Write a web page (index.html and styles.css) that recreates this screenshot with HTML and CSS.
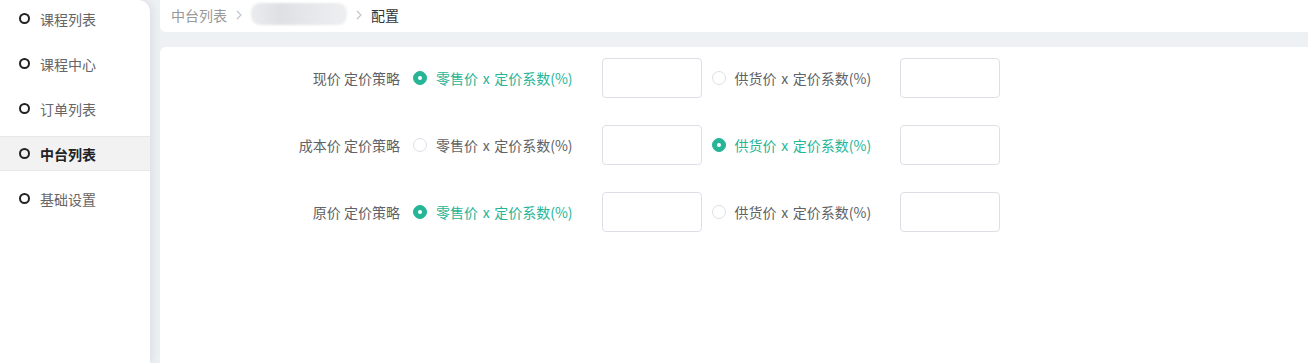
FILE: index.html
```html
<!doctype html>
<html lang="zh-CN">
<head>
    <meta charset="UTF-8">
    <meta name="viewport" content="width=device-width, initial-scale=1.0">
    <title>配置</title>
    <link rel="stylesheet" href="styles.css">
</head>
<body>
    <div class="layout">
        <!-- Sidebar -->
        <aside class="sidebar">
            <ul class="menu">
                <li class="menu-item"><span class="dot"></span>课程列表</li>
                <li class="menu-item"><span class="dot"></span>课程中心</li>
                <li class="menu-item"><span class="dot"></span>订单列表</li>
                <li class="menu-item active"><span class="dot"></span>中台列表</li>
                <li class="menu-item"><span class="dot"></span>基础设置</li>
            </ul>
        </aside>

        <main class="main">
            <!-- Breadcrumb -->
            <div class="crumbs">
                <span class="crumb">中台列表</span>
                <svg class="sep" width="6" height="10" viewBox="0 0 6 10"><polyline points="1,1 5,5 1,9" fill="none" stroke="#c0c4cc" stroke-width="1.1"/></svg>
                <span class="crumb-blur"></span>
                <svg class="sep" width="6" height="10" viewBox="0 0 6 10"><polyline points="1,1 5,5 1,9" fill="none" stroke="#c0c4cc" stroke-width="1.1"/></svg>
                <span class="crumb current">配置</span>
            </div>

            <!-- Form -->
            <section class="card">
                <div class="form-row">
                    <label class="form-label">现价 定价策略</label>
                    <span class="radio checked"><span class="radio-inner"></span>零售价 x 定价系数(%)</span>
                    <input class="num-input" type="text">
                    <span class="radio"><span class="radio-inner"></span>供货价 x 定价系数(%)</span>
                    <input class="num-input" type="text">
                </div>
                <div class="form-row">
                    <label class="form-label">成本价 定价策略</label>
                    <span class="radio"><span class="radio-inner"></span>零售价 x 定价系数(%)</span>
                    <input class="num-input" type="text">
                    <span class="radio checked"><span class="radio-inner"></span>供货价 x 定价系数(%)</span>
                    <input class="num-input" type="text">
                </div>
                <div class="form-row">
                    <label class="form-label">原价 定价策略</label>
                    <span class="radio checked"><span class="radio-inner"></span>零售价 x 定价系数(%)</span>
                    <input class="num-input" type="text">
                    <span class="radio"><span class="radio-inner"></span>供货价 x 定价系数(%)</span>
                    <input class="num-input" type="text">
                </div>
            </section>
        </main>
    </div>
</body>
</html>
```

FILE: styles.css
```css
/* Base */
body, html {
    margin: 0;
    padding: 0;
    height: 100%;
    font-family: "Noto Sans CJK SC", "Noto Sans", sans-serif;
    font-size: 14px;
    background-color: #eef1f4;
    overflow: hidden;
}

.layout {
    display: flex;
    height: 100vh;
}

/* Sidebar */
.sidebar {
    width: 150px;
    flex-shrink: 0;
    background: #fff;
    border-top-right-radius: 12px;
    box-shadow: 3px 0 8px rgba(0, 20, 50, 0.08);
    position: relative;
    z-index: 1;
}

.menu {
    list-style: none;
    margin: 0;
    padding: 1px 0 0;
}

.menu-item {
    display: flex;
    align-items: center;
    height: 35px;
    margin-bottom: 10px;
    padding-left: 19px;
    color: #666;
    box-sizing: border-box;
}

.menu-item.active {
    background: #f2f2f3;
    border-top: 1px solid #e8e8ea;
    border-bottom: 1px solid #e8e8ea;
    color: #222;
    font-weight: bold;
}

.dot {
    width: 7px;
    height: 7px;
    border: 2px solid #222;
    border-radius: 50%;
    margin-right: 10px;
}

/* Main area */
.main {
    flex-grow: 1;
    display: flex;
    flex-direction: column;
    padding-left: 10px;
}

.crumbs {
    height: 32px;
    box-sizing: border-box;
    padding-bottom: 3px;
    background: #fff;
    border-bottom-left-radius: 6px;
    display: flex;
    align-items: center;
    padding-left: 11px;
    color: #999;
    flex-shrink: 0;
}

.sep {
    margin: 0 9px;
}

.crumb.current {
    color: #333;
}

.crumb-blur {
    width: 96px;
    height: 22px;
    border-radius: 9px;
    background: linear-gradient(90deg, #ebecef 0%, #dfe0e4 30%, #e6e7ea 60%, #eeeff1 100%);
    filter: blur(1px);
    margin-top: -2px;
}

.card {
    flex-grow: 1;
    margin-top: 15px;
    background: #fff;
    border-top-left-radius: 6px;
    padding-top: 11px;
}

/* Form rows */
.form-row {
    display: flex;
    align-items: center;
    height: 40px;
    margin-bottom: 27px;
    color: #606266;
}

.form-label {
    width: 240px;
    text-align: right;
    margin-right: 13px;
}

.radio {
    display: flex;
    align-items: center;
    margin-right: 29px;
    color: #606266;
    word-spacing: 1.5px;
}

.radio-inner {
    width: 12px;
    height: 12px;
    border: 1px solid #dcdfe6;
    border-radius: 50%;
    margin-right: 9px;
    background: #fff;
    position: relative;
}

.radio.checked {
    color: #26b597;
}

.radio.checked .radio-inner {
    background: #26b597;
    border-color: #26b597;
}

.radio.checked .radio-inner:after {
    content: "";
    position: absolute;
    width: 4px;
    height: 4px;
    border-radius: 50%;
    background: #fff;
    left: 4px;
    top: 4px;
}

.num-input {
    width: 100px;
    height: 40px;
    box-sizing: border-box;
    border: 1px solid #dcdfe6;
    border-radius: 4px;
    margin-right: 10px;
    outline: none;
}
```
